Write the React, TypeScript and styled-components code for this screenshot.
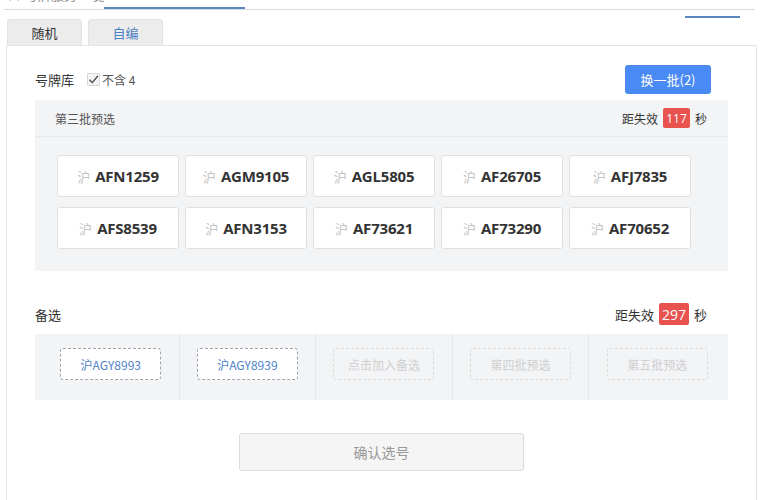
import React from "react";
import styled, { createGlobalStyle } from "styled-components";

const GlobalStyle = createGlobalStyle`
  body {
    margin: 0;
    background: #ffffff;
    font-family: "Noto Sans CJK SC", "Noto Sans", sans-serif;
    color: #333;
  }
`;

const plates = [
  "AFN1259",
  "AGM9105",
  "AGL5805",
  "AF26705",
  "AFJ7835",
  "AFS8539",
  "AFN3153",
  "AF73621",
  "AF73290",
  "AF70652",
];

const backups: { text: string; filled: boolean }[] = [
  { text: "沪AGY8993", filled: true },
  { text: "沪AGY8939", filled: true },
  { text: "点击加入备选", filled: false },
  { text: "第四批预选", filled: false },
  { text: "第五批预选", filled: false },
];

const App: React.FC = () => {
  return (
    <Page>
      <GlobalStyle />
      <TopNav>
        <NavItem $width={100}>
          <NavText>
            <NavIcon>◆◆</NavIcon> 号牌服务 一览
          </NavText>
        </NavItem>
        <NavItem $width={141} $active />
      </TopNav>
      <TabRow>
        <TabButton>随机</TabButton>
        <TabButton $blue>自编</TabButton>
        <Spacer />
        <RightMark />
      </TabRow>
      <Panel>
        <SectionHead>
          <HeadLeft>
            <SectionTitle>号牌库</SectionTitle>
            <CheckLabel>
              <CheckBox>
                <svg width="11" height="11" viewBox="0 0 11 11">
                  <path d="M1.5 5.8 L4.3 8.6 L9.8 2" fill="none" stroke="#444" strokeWidth="1.3" />
                </svg>
              </CheckBox>
              不含 4
            </CheckLabel>
          </HeadLeft>
          <PrimaryButton>换一批(2)</PrimaryButton>
        </SectionHead>

        <GreyBox>
          <BoxHeader>
            <BoxTitle>第三批预选</BoxTitle>
            <Countdown $size={12}>
              距失效 <Badge $size={12}>117</Badge> 秒
            </Countdown>
          </BoxHeader>
          <PlateGrid>
            {plates.map((p) => (
              <Plate key={p}>
                <Prefix>沪</Prefix>
                <PlateNo>{p}</PlateNo>
              </Plate>
            ))}
          </PlateGrid>
        </GreyBox>

        <BackupHead>
          <SectionTitle>备选</SectionTitle>
          <Countdown $size={13}>
            距失效 <Badge $size={14}>297</Badge> 秒
          </Countdown>
        </BackupHead>

        <BackupStrip>
          {backups.map((b, i) => (
            <BackupCell key={b.text} $last={i === backups.length - 1}>
              <Slot $filled={b.filled}>{b.text}</Slot>
            </BackupCell>
          ))}
        </BackupStrip>

        <ConfirmRow>
          <ConfirmButton>确认选号</ConfirmButton>
        </ConfirmRow>
      </Panel>
    </Page>
  );
};

const Page = styled.div`
  width: 781px;
  height: 500px;
  overflow: hidden;
  background: #fff;
`;

const TopNav = styled.div`
  display: flex;
  height: 9px;
  margin: 0 26px 0 4px;
  border-bottom: 1px solid #d6dbe1;
`;

const NavItem = styled.div<{ $width: number; $active?: boolean }>`
  width: ${(p) => p.$width}px;
  height: 9px;
  overflow: hidden;
  box-sizing: border-box;
  border-bottom: ${(p) => (p.$active ? "2px solid #5b87c0" : "none")};
`;

const NavText = styled.div`
  margin-top: -12px;
  padding-left: 2px;
  font-size: 13px;
  line-height: 14px;
  color: #888;
  white-space: nowrap;
`;

const NavIcon = styled.span`
  color: #5b7fb5;
  font-size: 8px;
`;

const TabRow = styled.div`
  display: flex;
  align-items: flex-end;
  height: 35px;
  padding-left: 7px;
`;

const TabButton = styled.div<{ $blue?: boolean }>`
  width: 75px;
  height: 26px;
  margin-right: 6px;
  box-sizing: border-box;
  display: flex;
  align-items: center;
  justify-content: center;
  background: #ececec;
  border: 1px solid #e2e2e2;
  border-bottom: none;
  border-radius: 4px 4px 0 0;
  font-size: 13px;
  color: ${(p) => (p.$blue ? "#4d7fc0" : "#333")};
`;

const Spacer = styled.div`
  flex: 1;
`;

const RightMark = styled.div`
  align-self: flex-start;
  margin-top: 6px;
  margin-right: 41px;
  width: 55px;
  height: 2px;
  background: #5b87c0;
`;

const Panel = styled.div`
  margin-left: 6px;
  width: 751px;
  height: 460px;
  box-sizing: border-box;
  border: 1px solid #e4e4e4;
  border-bottom: none;
  padding: 19px 28px 0 28px;
`;

const SectionHead = styled.div`
  display: flex;
  align-items: center;
  justify-content: space-between;
  height: 29px;
  padding-right: 17px;
`;

const HeadLeft = styled.div`
  display: flex;
  align-items: center;
  gap: 13px;
`;

const SectionTitle = styled.span`
  font-size: 13px;
  color: #333;
`;

const CheckLabel = styled.label`
  display: flex;
  align-items: center;
  gap: 2px;
  font-size: 12px;
  color: #555;
`;

const CheckBox = styled.span`
  display: inline-flex;
  width: 11px;
  height: 11px;
  border: 1px solid #d8d8d8;
  background: #f4f4f4;
  border-radius: 1px;
`;

const PrimaryButton = styled.button`
  width: 86px;
  height: 29px;
  border: none;
  border-radius: 3px;
  background: #4a8af4;
  color: #fff;
  font-family: inherit;
  font-size: 13px;
  padding: 0;
`;

const GreyBox = styled.div`
  margin-top: 6px;
  background: #f3f4f6;
  padding-bottom: 22px;
`;

const BoxHeader = styled.div`
  display: flex;
  align-items: center;
  justify-content: space-between;
  height: 36px;
  padding: 0 21px 0 20px;
  border-bottom: 1px solid #e6e8eb;
`;

const BoxTitle = styled.span`
  font-size: 12px;
  color: #555;
`;

const Countdown = styled.span<{ $size: number }>`
  display: flex;
  align-items: center;
  gap: 5px;
  font-size: ${(p) => p.$size}px;
  color: #333;
`;

const Badge = styled.span<{ $size: number }>`
  display: inline-flex;
  align-items: center;
  justify-content: center;
  padding: 0 3px;
  min-width: 27px;
  box-sizing: border-box;
  height: ${(p) => (p.$size > 12 ? 22 : 20)}px;
  background: #e8524f;
  color: #fff;
  border-radius: 2px;
  font-family: "Open Sans", "Noto Sans", sans-serif;
  font-size: ${(p) => p.$size}px;
`;

const PlateGrid = styled.div`
  display: grid;
  grid-template-columns: repeat(5, 122px);
  column-gap: 6px;
  row-gap: 10px;
  padding: 18px 0 0 22px;
`;

const Plate = styled.div`
  height: 42px;
  box-sizing: border-box;
  background: #fff;
  border: 1px solid #e0e0e0;
  border-radius: 3px;
  display: flex;
  align-items: center;
  justify-content: center;
  gap: 5px;
`;

const Prefix = styled.span`
  font-size: 13px;
  color: #c4c4c4;
`;

const PlateNo = styled.span`
  font-family: "Open Sans", "Noto Sans", sans-serif;
  font-weight: 700;
  font-size: 15px;
  letter-spacing: -0.2px;
  color: #333;
`;

const BackupHead = styled.div`
  display: flex;
  align-items: center;
  justify-content: space-between;
  height: 22px;
  margin-top: 32px;
  padding-right: 21px;
`;

const BackupStrip = styled.div`
  display: flex;
  margin-top: 9px;
  height: 66px;
  background: #f3f4f6;
  padding: 0 3px 0 8px;
`;

const BackupCell = styled.div<{ $last: boolean }>`
  flex: 1;
  display: flex;
  align-items: center;
  justify-content: center;
  padding-bottom: 6px;
  border-right: ${(p) => (p.$last ? "none" : "1px solid #e4e6ea")};
`;

const Slot = styled.div<{ $filled: boolean }>`
  width: 101px;
  height: 32px;
  box-sizing: border-box;
  display: flex;
  align-items: center;
  justify-content: center;
  border: 1px dashed ${(p) => (p.$filled ? "#9ea4ab" : "#dcdcdc")};
  border-radius: 3px;
  background: ${(p) => (p.$filled ? "#fff" : "transparent")};
  color: ${(p) => (p.$filled ? "#4d7fc9" : "#cfcfcf")};
  font-size: 12px;
`;

const ConfirmRow = styled.div`
  display: flex;
  justify-content: center;
  margin-top: 33px;
`;

const ConfirmButton = styled.button`
  width: 285px;
  height: 38px;
  background: #f5f5f5;
  border: 1px solid #dcdcdc;
  border-radius: 3px;
  color: #999;
  font-family: inherit;
  font-size: 14px;
`;

export default App;
